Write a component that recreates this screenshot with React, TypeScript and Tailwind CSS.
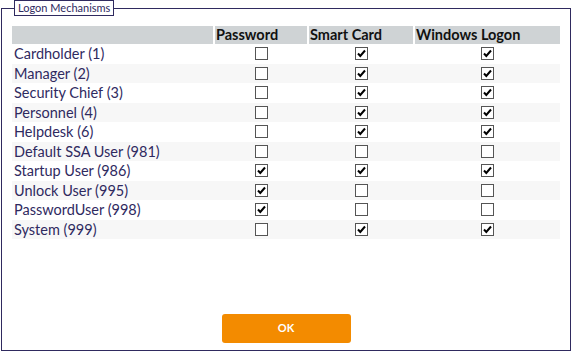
const rows: [string, boolean, boolean, boolean][] = [
  ["Cardholder (1)", false, true, true],
  ["Manager (2)", false, true, true],
  ["Security Chief (3)", false, true, true],
  ["Personnel (4)", false, true, true],
  ["Helpdesk (6)", false, true, true],
  ["Default SSA User (981)", false, false, false],
  ["Startup User (986)", true, true, true],
  ["Unlock User (995)", true, false, false],
  ["PasswordUser (998)", true, false, false],
  ["System (999)", false, true, true],
];

function Box({ checked }: { checked: boolean }) {
  return (
    <span className="inline-flex h-[13px] w-[13px] items-center justify-center border border-[#555] bg-white align-middle">
      {checked && (
        <svg width="11" height="11" viewBox="0 0 11 11">
          <path d="M2 5.5 L4.3 8 L9 2.5" fill="none" stroke="#000" strokeWidth="2" />
        </svg>
      )}
    </span>
  );
}

export default function App() {
  return (
    <div className="h-[351px] w-[572px] bg-white font-['Lato',sans-serif]">
      <fieldset className="mx-[1px] h-[351px] border border-[#2f2a5f] px-[10px] pb-0 pt-0">
        <legend className="ml-[2px] border border-[#2f2a5f] px-[3px] text-[11px] leading-[14px] text-[#2f2a5f]">
          Logon Mechanisms
        </legend>
        <table className="mt-[10px] w-[548px] border-collapse text-[14.5px] text-[#2f2a5f]">
          <thead>
            <tr className="h-[18px] bg-[#cfd3d5] text-left font-bold text-[#111]">
              <th className="w-[202px] border-r-2 border-white"></th>
              <th className="w-[94px] border-r-2 border-white pl-[1px] leading-[18px]">Password</th>
              <th className="w-[106px] border-r-2 border-white pl-[1px] leading-[18px]">Smart Card</th>
              <th className="pl-[1px] leading-[18px]">Windows Logon</th>
            </tr>
          </thead>
          <tbody>
            {rows.map(([name, a, b, c], i) => (
              <tr key={name} className={`h-[19.5px] ${i % 2 ? "bg-[#f7f7f7]" : "bg-white"}`}>
                <td className="pl-[2px] leading-[19px]">{name}</td>
                <td className="text-center leading-[0]"><Box checked={a} /></td>
                <td className="text-center leading-[0]"><Box checked={b} /></td>
                <td className="text-center leading-[0]"><Box checked={c} /></td>
              </tr>
            ))}
          </tbody>
        </table>
        <div className="mt-[75px] flex justify-center">
          <button className="h-[29px] w-[129px] rounded-[3px] bg-[#f38b00] text-[11px] font-bold text-white">
            OK
          </button>
        </div>
      </fieldset>
    </div>
  );
}
